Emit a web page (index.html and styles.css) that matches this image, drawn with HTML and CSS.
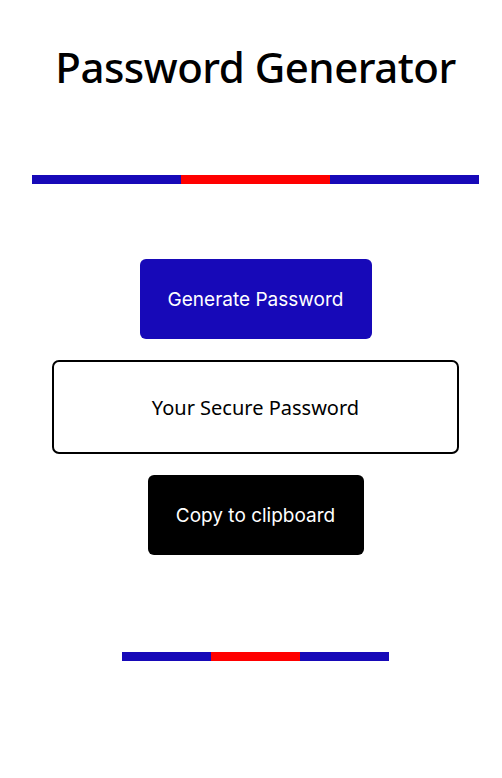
FILE: index.html
```html
<!DOCTYPE html>
<html lang="en">
<head>
<meta charset="utf-8">
<title>Password Generator</title>
<link rel="stylesheet" href="styles.css">
</head>
<body>
<main class="page">
  <h1 class="title">Password Generator</h1>
  <div class="stripe stripe-top">
    <span class="seg blue"></span><span class="seg red"></span><span class="seg blue"></span>
  </div>
  <button class="btn btn-generate" type="button">Generate Password</button>
  <div class="output">Your Secure Password</div>
  <button class="btn btn-copy" type="button">Copy to clipboard</button>
  <div class="stripe stripe-bottom">
    <span class="seg blue"></span><span class="seg red"></span><span class="seg blue"></span>
  </div>
</main>
</body>
</html>
```
FILE: styles.css
```css
* { box-sizing: border-box; }
html, body { margin: 0; padding: 0; background: #fff; }
.page {
  display: flex;
  flex-direction: column;
  align-items: center;
  padding-left: 9px;
  width: 502px;
  font-family: "Noto Sans", sans-serif;
}
.title {
  margin: 41px 0 0;
  font-size: 42px;
  line-height: 52px;
  font-weight: 500;
  color: #000;
  letter-spacing: -0.5px;
}
.stripe { display: flex; }
.stripe-top { width: 447px; height: 9px; margin-top: 82px; }
.stripe-bottom { width: 268px; height: 9px; margin-top: 97px; }
.seg { flex: 1; }
.blue { background: #1709b8; }
.red { background: #ff0000; }
.btn {
  border: none;
  border-radius: 6px;
  color: #fff;
  font-family: Inter, sans-serif;
  font-size: 19px;
  height: 80px;
  padding: 0;
  cursor: pointer;
}
.btn-generate { width: 232px; background: #1709b8; margin-top: 75px; }
.btn-copy { width: 216px; background: #000; margin-top: 21px; }
.output {
  margin-top: 21px;
  width: 407px;
  height: 94px;
  border: 2px solid #000;
  border-radius: 7px;
  display: flex;
  align-items: center;
  justify-content: center;
  font-size: 20px;
  color: #000;
}
```
